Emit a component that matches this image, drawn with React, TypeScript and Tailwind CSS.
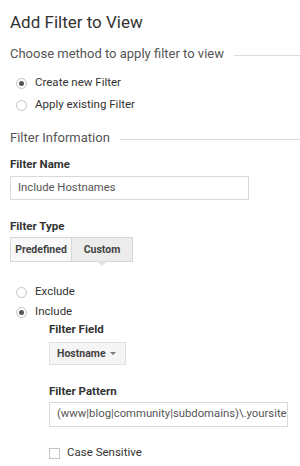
const font = { fontFamily: 'Roboto, "Liberation Sans", sans-serif' }

function Radio({ checked, label, h }: { checked?: boolean; label: string; h: string }) {
  return (
    <label className={`flex items-center gap-[8px] pl-[6px] text-[11.5px] text-[#333] ${h}`}>
      <span className="flex h-[11px] w-[11px] items-center justify-center rounded-full border border-[#c4c4c4] bg-white">
        {checked && <span className="h-[5px] w-[5px] rounded-full bg-[#555]" />}
      </span>
      {label}
    </label>
  )
}

function SectionTitle({ children }: { children: string }) {
  return (
    <div className="flex h-[16px] items-center gap-[10px] text-[13px] leading-[16px] text-[#555]">
      <span className="whitespace-nowrap">{children}</span>
      <span className="mt-[2px] h-px flex-1 bg-[#dcdcdc]" />
    </div>
  )
}

export default function App() {
  return (
    <div className="h-[466px] w-[300px] overflow-hidden bg-white pl-[10px]" style={font}>
      <h1 className="pt-[12px] text-[17px] leading-[20px] text-[#333]">Add Filter to View</h1>

      <div className="mt-[14px]">
        <SectionTitle>Choose method to apply filter to view</SectionTitle>
      </div>

      <div className="mt-[10px] flex flex-col">
        <Radio checked h="h-[22px]" label="Create new Filter" />
        <Radio h="h-[22px]" label="Apply existing Filter" />
      </div>

      <div className="mt-[14px]">
        <SectionTitle>Filter Information</SectionTitle>
      </div>

      <div className="mt-[11px] text-[11.5px] font-bold leading-[14px] text-[#333]">Filter Name</div>
      <div className="mt-[5px] flex h-[24px] w-[239px] items-center border border-[#d9d9d9] px-[7px] text-[11.3px] text-[#555]">
        Include Hostnames
      </div>

      <div className="mt-[19px] text-[11.5px] font-bold leading-[14px] text-[#333]">Filter Type</div>
      <div className="mt-[4px] flex h-[25px] w-[123px] text-[10.5px] font-bold text-[#444]">
        <span className="flex w-[62px] items-center justify-center border border-[#d6d6d6] bg-[#f8f8f8]">Predefined</span>
        <span className="relative flex w-[61px] items-center justify-center border border-l-0 border-[#d6d6d6] bg-[#ececec]">
          Custom
          <span className="absolute left-1/2 top-full -translate-x-1/2 border-x-[5px] border-t-[5px] border-x-transparent border-t-[#e2e2e2]" />
        </span>
      </div>

      <div className="mt-[20px] flex flex-col">
        <Radio h="h-[20px]" label="Exclude" />
        <Radio checked h="h-[20px]" label="Include" />
      </div>

      <div className="ml-[39px]">
        <div className="text-[11.5px] font-bold leading-[14px] text-[#333]">Filter Field</div>
        <div className="mt-[6px] flex h-[23px] w-[77px] items-center justify-between border border-[#e0e0e0] bg-[#f5f5f5] pl-[7px] pr-[9px] text-[10.5px] font-bold text-[#444]">
          Hostname
          <span className="border-x-[3px] border-t-[3px] border-x-transparent border-t-[#777]" />
        </div>

        <div className="mt-[19px] text-[11.5px] font-bold leading-[14px] text-[#333]">Filter Pattern</div>
        <div className="mt-[4px] flex h-[25px] w-[239px] items-center overflow-hidden whitespace-nowrap border border-[#d9d9d9] px-[7px] text-[11.3px] text-[#555]">
          (www|blog|community|subdomains)\.yoursite\.com
        </div>

        <label className="mt-[19px] flex h-[14px] items-center gap-[7px] text-[11.5px] text-[#333]">
          <span className="h-[11px] w-[11px] border border-[#c4c4c4] bg-white" />
          Case Sensitive
        </label>
      </div>
    </div>
  )
}
